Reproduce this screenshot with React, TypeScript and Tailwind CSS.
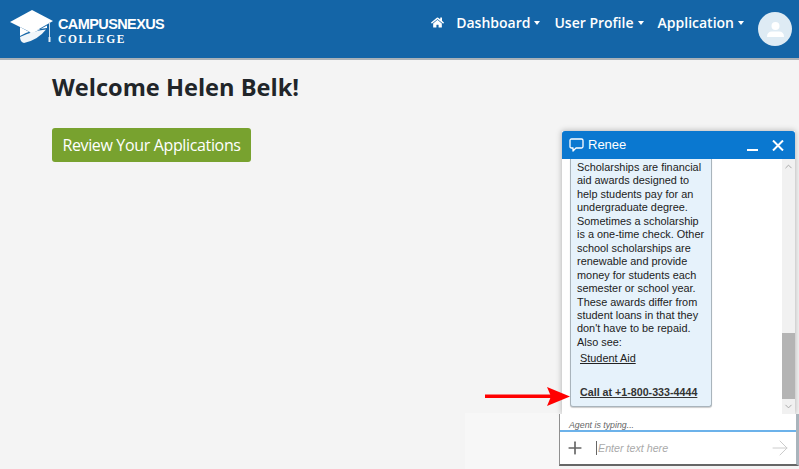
import { ChevronUp, ChevronDown, Plus, ArrowRight } from "lucide-react";
import { FaHome } from "react-icons/fa";

const navItems = ["Dashboard", "User Profile", "Application"];

const CapLogo = () => (
  <svg width="44" height="34" viewBox="0 0 44 34" className="shrink-0">
    <path d="M0 12 L22 0 L43 11 L22 23 Z" fill="#fff" />
    <path d="M10 17 L22 23.5 L37 15.5 L37 18 Q22 19 10 26 Z" fill="#fff" />
    <path d="M10 27 Q22 21 36 19.5 Q28 30 14 33 Q10 32 10 27 Z" fill="#f1f6fa" />
    <rect x="39" y="12" width="1" height="20" fill="#cfdeea" />
    <rect x="38.5" y="27" width="2" height="5" fill="#e6eef5" />
  </svg>
);

const Header = () => (
  <header className="h-[60px] bg-[#1465a7] border-b-2 border-[#a9b1b8] flex items-start justify-between pl-[10px] pr-[7px] font-['Open_Sans',sans-serif]">
    <div className="flex items-start pt-[10px] gap-[4px]">
      <CapLogo />
      <div className="pt-[7px] text-white">
        <div className="font-['Liberation_Sans',sans-serif] font-bold text-[14.5px] leading-[15px] tracking-[-0.6px]">CAMPUSNEXUS</div>
        <div className="font-['Liberation_Serif',serif] font-bold text-[11.5px] leading-[14px] tracking-[1.6px]">COLLEGE</div>
      </div>
    </div>
    <nav className="flex items-start text-white">
      <FaHome size={13} className="mt-[16px] mr-[12px]" />
      {navItems.map((item) => (
        <div key={item} className="flex items-center h-[19px] mt-[13px] mr-[14px] text-[14px] font-semibold">
          {item}
          <span className="ml-[4px] w-0 h-0 border-x-[3.5px] border-x-transparent border-t-[4px] border-t-white" />
        </div>
      ))}
      <div className="mt-[12px] w-[34px] h-[34px] rounded-full bg-[#deebf4] flex items-center justify-center">
        <svg width="17" height="15" viewBox="0 0 17 15" fill="#fff">
          <circle cx="8.5" cy="4" r="4" />
          <path d="M0 15 Q0 9.5 5 9.5 L12 9.5 Q17 9.5 17 15 Z" />
        </svg>
      </div>
    </nav>
  </header>
);

const ChatWidget = () => (
  <div className="absolute left-[559px] top-[131px] w-[240px] h-[335px] flex flex-col font-['Liberation_Sans',sans-serif]">
    <div className="ml-[3px] w-[233px] h-[283px] shrink-0 flex flex-col bg-white shadow-[0_0_6px_rgba(0,0,0,0.3)]">
      <div className="h-[28px] shrink-0 bg-[#0a78d0] rounded-t-[3px] flex items-center pl-[7px] pr-[11px] text-white">
        <svg width="15" height="14" viewBox="0 0 15 14" fill="none" stroke="#fff" strokeWidth="1.3" strokeLinejoin="round">
          <path d="M2.5 1 H12.5 Q14 1 14 2.5 V8.5 Q14 10 12.5 10 H7 L4 13 V10 H2.5 Q1 10 1 8.5 V2.5 Q1 1 2.5 1 Z" />
        </svg>
        <span className="ml-[4px] text-[13px]">Renee</span>
        <svg width="11" height="11" viewBox="0 0 11 11" stroke="#fff" strokeWidth="2" className="ml-auto mr-[14px] mt-[2px]">
          <path d="M0 9 H11" />
        </svg>
        <svg width="12" height="11" viewBox="0 0 12 11" stroke="#fff" strokeWidth="2" fill="none">
          <path d="M1 0.5 L11 10.5 M11 0.5 L1 10.5" />
        </svg>
      </div>
      <div className="flex-1 flex min-h-0">
        <div className="flex-1 pl-[8px] overflow-hidden">
          <div className="w-[142px] h-[248px] bg-[#e6f2fb] border-x border-b border-[#a9b4bc] rounded-b-[3px] shadow-[0_1px_1px_rgba(0,0,0,0.2)] pl-[6px] pr-[4px] text-[10.9px] leading-[13.46px] text-[#222]">
            <p className="pt-[2px]">
              Scholarships are financial aid awards designed to help students pay for an undergraduate degree. Sometimes a scholarship is a one-time check. Other school scholarships are renewable and provide money for students each semester or school year. These awards differ from student loans in that they don't have to be repaid. Also see:
            </p>
            <a className="block pl-[3px] mt-[3px] underline font-medium">Student Aid</a>
            <a className="block pl-[3px] mt-[20px] underline font-bold whitespace-nowrap text-[10.7px] text-[#333]">Call at +1-800-333-4444</a>
          </div>
        </div>
        <div className="w-[13px] shrink-0 bg-[#f1f1f1] flex flex-col items-center text-[#a3a3a3]">
          <ChevronUp size={11} strokeWidth={2} className="mt-[2px]" />
          <div className="w-full h-[66px] bg-[#b4b4b4] mt-auto" />
          <div className="h-[15px] flex items-center">
            <ChevronDown size={11} strokeWidth={2} />
          </div>
        </div>
      </div>
    </div>
    <div className="flex-1 flex flex-col bg-white border-l border-r-[3px] border-b-2 border-l-[#8f8f8f] border-r-[#a9b4bc] border-b-[#666]">
      <div className="h-[18px] shrink-0 pl-[9px] pt-[5px] text-[8.8px] leading-[12px] italic text-[#666] border-b-2 border-[#6cb2ea]">
        Agent is typing...
      </div>
      <div className="flex-1 flex items-center pl-[5px] pr-[4px]">
        <Plus size={20} strokeWidth={2} className="text-[#666]" />
        <span className="ml-[11px] w-px h-[14px] bg-[#666]" />
        <span className="ml-[1px] text-[10.7px] italic text-[#aaa]">Enter text here</span>
        <ArrowRight size={24} strokeWidth={1} className="ml-auto text-[#ccc]" />
      </div>
    </div>
  </div>
);

const RedArrow = () => (
  <svg width="85" height="20" viewBox="0 0 85 20" className="absolute left-[485px] top-[387px]">
    <rect x="0" y="7.5" width="66" height="3.5" fill="#f00" />
    <path d="M62 0 L85 9.5 L62 19 L66 9.5 Z" fill="#f00" />
  </svg>
);

export default function App() {
  return (
    <div className="relative w-[799px] h-[469px] overflow-hidden bg-[#f4f4f4]">
      <Header />
      <main className="pl-[52px] pt-[11px] font-['Open_Sans',sans-serif]">
        <h1 className="text-[23.6px] leading-[32px] font-bold text-[#212529]">Welcome Helen Belk!</h1>
        <button className="mt-[25px] h-[34px] w-[199px] rounded-[3px] bg-[#78a22f] text-white text-[16px] tracking-[-0.35px]">
          Review Your Applications
        </button>
      </main>
      <div className="absolute left-[465px] top-[413px] bottom-0 w-[95px] bg-[#f7f7f7]" />
      <ChatWidget />
      <RedArrow />
    </div>
  );
}
